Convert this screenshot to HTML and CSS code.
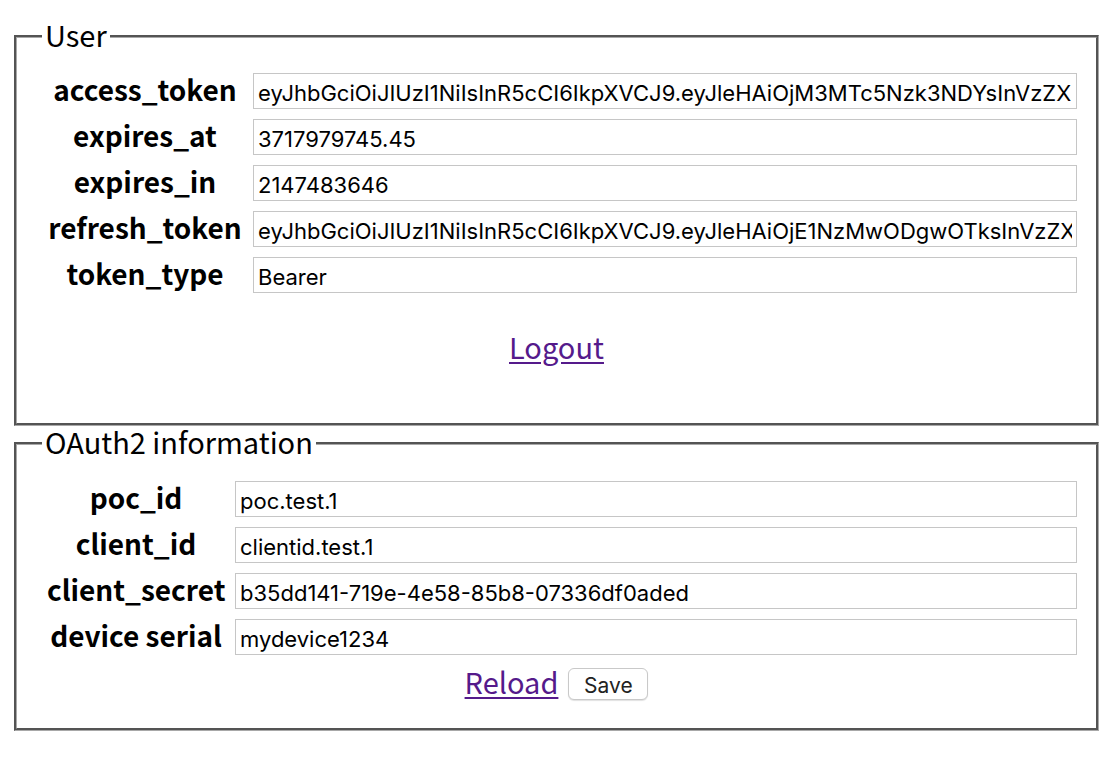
FILE: index.html
```html
<!DOCTYPE html>
<html>
<head>
<meta charset="utf-8">
<title>OAuth2</title>
<link rel="stylesheet" href="styles.css">
</head>
<body>
<fieldset class="box box-user">
  <legend class="box-title">User</legend>
  <div class="rows rows-user">
    <label class="row-label">access_token</label>
    <input class="row-input" type="text" value="eyJhbGciOiJIUzI1NiIsInR5cCI6IkpXVCJ9.eyJleHAiOjM3MTc5Nzk3NDYsInVzZXIiOiJteWRldmljZTEyMzQifQ">
    <label class="row-label">expires_at</label>
    <input class="row-input" type="text" value="3717979745.45">
    <label class="row-label">expires_in</label>
    <input class="row-input" type="text" value="2147483646">
    <label class="row-label">refresh_token</label>
    <input class="row-input" type="text" value="eyJhbGciOiJIUzI1NiIsInR5cCI6IkpXVCJ9.eyJleHAiOjE1NzMwODgwOTksInVzZXIiOiJteWRldmljZTEyMzQifQ">
    <label class="row-label">token_type</label>
    <input class="row-input" type="text" value="Bearer">
  </div>
  <div class="actions actions-user">
    <a class="action-link" href="#">Logout</a>
  </div>
</fieldset>
<fieldset class="box box-oauth">
  <legend class="box-title">OAuth2 information</legend>
  <div class="rows rows-oauth">
    <label class="row-label">poc_id</label>
    <input class="row-input" type="text" value="poc.test.1">
    <label class="row-label">client_id</label>
    <input class="row-input" type="text" value="clientid.test.1">
    <label class="row-label">client_secret</label>
    <input class="row-input" type="text" value="b35dd141-719e-4e58-85b8-07336df0aded">
    <label class="row-label">device serial</label>
    <input class="row-input" type="text" value="mydevice1234">
  </div>
  <div class="actions actions-oauth">
    <a class="action-link action-link-raised" href="#">Reload</a>
    <button class="save-btn" type="button">Save</button>
  </div>
</fieldset>
</body>
</html>
```
FILE: styles.css
```css
html, body {
  background: #ffffff;
}
body {
  margin: 0;
  padding: 21px 12px 0 14px;
  font-family: "Noto Sans CJK KR", "Noto Sans", sans-serif;
  color: #000;
}
.box {
  margin: 0;
  border: 3px groove #a8a8a8;
  padding: 22px 19px 0 30px;
  min-width: 0;
}
.box-oauth {
  margin-top: 2px;
  padding-top: 23px;
}
.box-title {
  font-size: 29px;
  line-height: 26px;
  padding: 0 3px 4px;
  margin-left: -5px;
  font-weight: 400;
}
.rows {
  display: grid;
  row-gap: 10px;
  column-gap: 10px;
  align-items: center;
}
.rows-user {
  grid-template-columns: 196px 1fr;
}
.rows-oauth {
  grid-template-columns: 178px 1fr;
}
.row-label {
  font-size: 28px;
  font-weight: 700;
  text-align: center;
  white-space: nowrap;
  line-height: 32px;
  height: 36px;
  box-sizing: border-box;
  padding-bottom: 4px;
}
.row-input {
  height: 36px;
  box-sizing: border-box;
  border: 1px solid #c6c6c6;
  padding: 3px 4px 0;
  font-family: Inter, "Liberation Sans", sans-serif;
  font-size: 22px;
  color: #000;
  background: #fff;
  outline: none;
  min-width: 0;
  width: 100%;
}
.actions {
  display: flex;
  justify-content: center;
  align-items: center;
  gap: 10px;
  margin-left: -30px;
  margin-right: -19px;
}
.actions-user {
  margin-top: 36px;
  padding-bottom: 60px;
}
.actions-oauth {
  margin-top: 12px;
  padding-bottom: 27px;
}
.action-link {
  font-size: 29px;
  line-height: 34px;
  color: #551a8b;
  text-decoration: underline;
  text-underline-offset: 3px;
}
.action-link-raised {
  line-height: 28px;
  padding-bottom: 6px;
}
.save-btn {
  width: 80px;
  height: 32px;
  border: 1px solid #c9c9c9;
  border-radius: 6px;
  background: #fff;
  box-shadow: 0 1px 1px rgba(0,0,0,0.12);
  font-family: Inter, "Liberation Sans", sans-serif;
  font-size: 21px;
  color: #222;
  padding: 2px 0 0;
}
```
